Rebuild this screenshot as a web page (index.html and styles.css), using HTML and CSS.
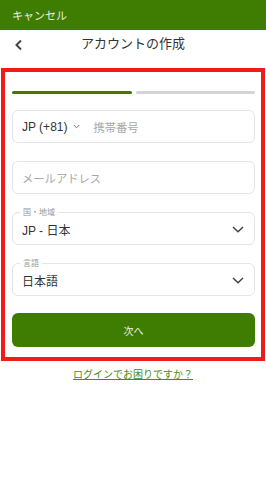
FILE: index.html
```html
<!DOCTYPE html>
<html lang="ja">
<head>
<meta charset="utf-8">
<link rel="stylesheet" href="styles.css">
</head>
<body>
<div class="topbar"><span class="cancel">キャンセル</span></div>
<div class="header">
  <svg class="back" width="10" height="12" viewBox="0 0 10 12"><path d="M7 1.5 L2.5 6 L7 10.5" fill="none" stroke="#444" stroke-width="2"/></svg>
  <div class="title">アカウントの作成</div>
</div>
<div class="frame">
  <div class="progress"><div class="seg on"></div><div class="seg"></div></div>
  <div class="field phone">
    <span class="cc">JP (+81)</span>
    <svg class="chev-s" width="7" height="5" viewBox="0 0 7 5"><path d="M0.8 1 L3.5 3.8 L6.2 1" fill="none" stroke="#777" stroke-width="1"/></svg>
    <span class="ph">携帯番号</span>
  </div>
  <div class="field"><span class="ph">メールアドレス</span></div>
  <div class="field sel">
    <span class="lbl">国・地域</span>
    <span class="val">JP - 日本</span>
    <svg class="chev" width="12" height="7" viewBox="0 0 12 7"><path d="M1 1 L6 5.8 L11 1" fill="none" stroke="#444" stroke-width="1.5"/></svg>
  </div>
  <div class="field sel">
    <span class="lbl">言語</span>
    <span class="val">日本語</span>
    <svg class="chev" width="12" height="7" viewBox="0 0 12 7"><path d="M1 1 L6 5.8 L11 1" fill="none" stroke="#444" stroke-width="1.5"/></svg>
  </div>
  <div class="btn">次へ</div>
</div>
<div class="help"><a href="#">ログインでお困りですか？</a></div>
</body>
</html>
```
FILE: styles.css
```css
* { box-sizing: border-box; }
body {
  margin: 0;
  background: #fff;
  font-family: "Liberation Sans", "Noto Sans CJK JP", sans-serif;
  color: #333;
}
.topbar {
  height: 30px;
  background: #3f7d02;
  display: flex;
  align-items: center;
  padding-left: 12px;
}
.cancel {
  color: #e8f0e0;
  font-size: 11px;
  font-family: "Noto Sans CJK JP", sans-serif;
}
.header {
  height: 38px;
  position: relative;
  display: flex;
  justify-content: center;
}
.back {
  position: absolute;
  left: 14px;
  top: 9px;
}
.title {
  font-family: "Noto Sans CJK JP", sans-serif;
  font-size: 13px;
  line-height: 20px;
  margin-top: 3px;
  color: #333;
}
.frame {
  margin-left: 1px;
  width: 264px;
  border: 4px solid #f21b1b;
  padding: 19px 6px 10px 7px;
  display: flex;
  flex-direction: column;
}
.progress {
  display: flex;
  gap: 4px;
  height: 3px;
  margin-bottom: 16px;
}
.seg {
  flex: 1;
  background: #d4d4d4;
  border-radius: 2px;
}
.seg.on { background: #3f7d02; }
.field {
  position: relative;
  height: 33px;
  border: 1px solid #e4e4e4;
  border-radius: 6px;
  display: flex;
  align-items: center;
  padding: 0 9px;
  margin-bottom: 18px;
}
.phone .cc {
  font-size: 12px;
  color: #333;
}
.chev-s { margin-left: 6px; margin-right: 13px; }
.ph {
  font-family: "Noto Sans CJK JP", sans-serif;
  font-size: 11.3px;
  color: #a8a8a8;
}
.sel { justify-content: space-between; }
.lbl {
  position: absolute;
  top: -6px;
  left: 7px;
  background: #fff;
  padding: 0 3px;
  font-family: "Noto Sans CJK JP", sans-serif;
  font-size: 8px;
  line-height: 10px;
  color: #999;
}
.val {
  font-size: 12px;
  color: #333;
  margin-top: 2px;
}
.chev { margin-right: 1px; margin-top: 2px; }
.btn {
  height: 34px;
  background: #3f7d02;
  border-radius: 6px;
  display: flex;
  align-items: center;
  justify-content: center;
  color: #eaf2e2;
  font-family: "Noto Sans CJK JP", sans-serif;
  font-size: 10px;
  margin-top: -1px;
}
.help {
  text-align: center;
  margin-top: 4px;
  line-height: 15px;
}
.help a {
  font-family: "Noto Sans CJK JP", sans-serif;
  font-size: 10px;
  color: #4a8a1a;
  text-decoration: underline;
}
```
